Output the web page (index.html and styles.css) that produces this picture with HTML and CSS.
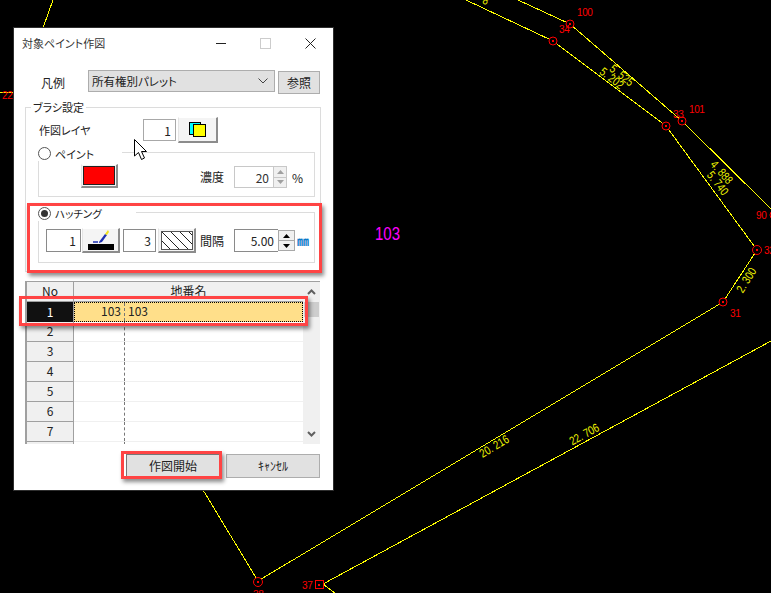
FILE: index.html
```
<!DOCTYPE html>
<html lang="ja">
<head>
<meta charset="utf-8">
<title>対象ペイント作図</title>
<link rel="stylesheet" href="styles.css">
</head>
<body>
<div class="desktop">
  <svg class="drawing" width="771" height="593" viewBox="0 0 771 593">
    <g class="lines">
      <polyline points="466,0 553,41 666,126 757,250 723,302 258,581 203,490"/>
      <polyline points="518,0 570,24 682,121 771,209"/>
      <polyline points="53,0 43,28"/>
      <polyline points="0,92 13,92"/>
      <polyline points="771,341 323,584 335,593"/>
    </g>
    <g class="nodes">
      <circle cx="553" cy="41" r="4"/><circle cx="570" cy="24" r="4"/>
      <circle cx="666" cy="126" r="4"/><circle cx="682" cy="121" r="4"/>
      <circle cx="757" cy="250" r="4.500"/><circle cx="723" cy="302" r="4"/>
      <circle cx="258" cy="582" r="4.500"/><circle cx="774" cy="215" r="4"/>
      <rect x="315.500" y="580.500" width="8" height="8"/>
    </g>
    <g class="dots">
      <rect x="552" y="40" width="2" height="2"/><rect x="569" y="23" width="2" height="2"/>
      <rect x="665" y="125" width="2" height="2"/><rect x="681" y="120" width="2" height="2"/>
      <rect x="756" y="249" width="2" height="2"/><rect x="722" y="301" width="2" height="2"/>
      <rect x="257" y="581" width="2" height="2"/><rect x="318" y="584" width="2" height="2"/>
    </g>
    <g class="point-labels">
      <text x="577" y="16">100</text><text x="559" y="33">34</text>
      <text x="689" y="113">101</text><text x="673" y="118">33</text>
      <text x="756" y="219">90</text><text x="764" y="254">32</text>
      <text x="730" y="317">31</text><text x="302" y="589">37</text>
      <text x="253" y="598">38</text><text x="2" y="99">22</text>
    </g>
    <g class="dim-labels">
      <text transform="translate(494 446) rotate(-31) scale(.8 1)">20. 216</text>
      <text transform="translate(584 434) rotate(-29) scale(.8 1)">22. 706</text>
      <text transform="translate(622 75) rotate(38) scale(.8 1)">5. 525</text>
      <text transform="translate(612 78) rotate(38) scale(.8 1)">5. 202</text>
      <text transform="translate(722 172) rotate(48) scale(.8 1)">4. 888</text>
      <text transform="translate(718 183) rotate(52) scale(.8 1)">5. 740</text>
      <text transform="translate(746 280) rotate(-58) scale(.8 1)">2. 300</text>
      <text transform="translate(486 0) rotate(25) scale(.8 1)">8</text>
    </g>
    <text class="parcel-label" x="375" y="240" textLength="25" lengthAdjust="spacingAndGlyphs">103</text>
  </svg>

  <section class="dialog">
    <header class="titlebar">
      <span class="title">対象ペイント作図</span>
      <div class="winctl">
        <span class="winbtn"><svg width="10" height="10" viewBox="0 0 10 10"><path class="ctl-line" d="M0 5.500H10"/></svg></span>
        <span class="winbtn"><svg width="11" height="11" viewBox="0 0 11 11"><rect class="ctl-off" x="0.500" y="0.500" width="10" height="10"/></svg></span>
        <span class="winbtn"><svg width="11" height="11" viewBox="0 0 11 11"><path class="ctl-line" d="M0.500 0.500L10.500 10.500M10.500 0.500L0.500 10.500"/></svg></span>
      </div>
    </header>

    <div class="legend-row">
      <span class="legend-label">凡例</span>
      <div class="select">
        <span>所有権別パレット</span>
        <svg width="10" height="6" viewBox="0 0 10 6"><path class="chev" d="M0.500 0.500L5 5L9.500 0.500"/></svg>
      </div>
      <div class="flat-btn ref-btn">参照</div>
    </div>

    <div class="group">
      <span class="group-title">ブラシ設定</span>
      <div class="layer-row">
        <span class="layer-label">作図レイヤ</span>
        <div class="field layer-field">1</div>
        <div class="raised layer-btn">
          <svg width="18" height="16" viewBox="0 0 18 16"><rect class="sq-cyan" x="0.500" y="0.500" width="11" height="12"/><rect class="sq-yellow" x="4.500" y="2.500" width="12" height="12"/></svg>
        </div>
      </div>

      <div class="subgroup paint">
        <div class="radio-legend paint-legend"><span class="radio"></span><span>ペイント</span></div>
        <div class="paint-row">
          <div class="raised swatch-btn"><span class="swatch"></span></div>
          <span class="density-label">濃度</span>
          <div class="spin-wrap off">
            <div class="field density-field">20</div>
            <div class="spinner off">
              <span class="spin-btn"><svg width="7" height="4" viewBox="0 0 7 4"><path d="M3.500 0L7 4H0Z"/></svg></span>
              <span class="spin-btn"><svg width="7" height="4" viewBox="0 0 7 4"><path d="M0 0H7L3.500 4Z"/></svg></span>
            </div>
          </div>
          <span class="pct">%</span>
        </div>
      </div>

      <div class="subgroup hatch">
        <div class="radio-legend hatch-legend"><span class="radio checked"></span><span>ハッチング</span></div>
        <div class="hatch-row">
          <div class="field pen-field">1</div>
          <div class="raised tool-btn pen-btn">
            <svg width="28" height="22" viewBox="0 0 28 22">
              <rect x="1" y="15" width="26" height="6" fill="#000"/>
              <path d="M12 13L18 5L20 6L15 13L12 14Z" fill="#1d2fb0"/>
              <path d="M18 5L21 1L22 3L20 6Z" fill="#f2e21b"/>
              <path d="M6 13H11" stroke="#1d2fb0" stroke-width="1.500"/>
            </svg>
          </div>
          <div class="field hatch-field">3</div>
          <div class="raised tool-btn hatch-btn">
            <svg width="32" height="19" viewBox="0 0 32 19">
              <rect x="0.500" y="0.500" width="31" height="18" fill="#fff" stroke="#555"/>
              <path class="hatch-lines" d="M1 1L18 18M10 1L27 18M19 1L31 13M28 1L31 4M1 10L9 18"/>
            </svg>
          </div>
          <span class="gap-label">間隔</span>
          <div class="spin-wrap">
            <div class="field gap-field">5.00</div>
            <div class="spinner">
              <span class="spin-btn"><svg width="7" height="4" viewBox="0 0 7 4"><path d="M3.500 0L7 4H0Z"/></svg></span>
              <span class="spin-btn"><svg width="7" height="4" viewBox="0 0 7 4"><path d="M0 0H7L3.500 4Z"/></svg></span>
            </div>
          </div>
          <span class="unit">㎜</span>
        </div>
      </div>
    </div>

    <div class="table">
      <div class="grid">
        <div class="row head"><div class="no">No</div><div class="head-name">地番名</div></div>
        <div class="row current"><div class="no">1</div><div class="data"><span class="num">103</span><span class="name">103</span></div></div>
        <div class="row"><div class="no">2</div><div class="data"><span class="num"></span><span class="name"></span></div></div>
        <div class="row"><div class="no">3</div><div class="data"><span class="num"></span><span class="name"></span></div></div>
        <div class="row"><div class="no">4</div><div class="data"><span class="num"></span><span class="name"></span></div></div>
        <div class="row"><div class="no">5</div><div class="data"><span class="num"></span><span class="name"></span></div></div>
        <div class="row"><div class="no">6</div><div class="data"><span class="num"></span><span class="name"></span></div></div>
        <div class="row"><div class="no">7</div><div class="data"><span class="num"></span><span class="name"></span></div></div>
        <div class="row"><div class="no"></div><div class="data"><span class="num"></span><span class="name"></span></div></div>
      </div>
      <div class="scrollbar">
        <span class="arrow"><svg width="9" height="6" viewBox="0 0 9 6"><path class="sb-chev" d="M1 5L4.500 1.500L8 5"/></svg></span>
        <span class="thumb"></span>
        <span class="arrow bottom"><svg width="9" height="6" viewBox="0 0 9 6"><path class="sb-chev" d="M1 1L4.500 4.500L8 1"/></svg></span>
      </div>
    </div>

    <div class="actions">
      <div class="flat-btn action start">作図開始</div>
      <div class="flat-btn action">ｷｬﾝｾﾙ</div>
    </div>

    <span class="mark mark-hatch"></span>
    <span class="mark mark-row"></span>
    <span class="mark mark-start"></span>
  </section>

  <svg class="cursor" width="14" height="22" viewBox="0 0 14 22">
    <path d="M0.500 0.500V17L4.500 13.500L7.500 20.500L10.500 19L7.500 12.500H12.500Z"/>
  </svg>
</div>
</body>
</html>
```
FILE: styles.css
```
* { box-sizing: border-box; }
html, body { margin: 0; padding: 0; background: #000; }
body {
  font-family: "Noto Sans CJK JP", "Noto Sans", sans-serif;
  font-size: 11px;
  font-feature-settings: "palt";
  color: #222;
}
.desktop { position: relative; width: 771px; height: 593px; overflow: hidden; background: #000; }

/* drawing */
.drawing { position: absolute; left: 0; top: 0; }
.lines polyline { fill: none; stroke: #ff0; stroke-width: 1; shape-rendering: crispEdges; }
.nodes circle, .nodes rect { fill: #000; stroke: #f00; stroke-width: 1; }
.dots rect { fill: #f00; }
.point-labels text { fill: #f00; font-family: "Liberation Sans", sans-serif; font-size: 10px; letter-spacing: -0.4px; }
.dim-labels text { fill: #f0f500; font-family: "Liberation Sans", sans-serif; font-size: 12px; text-anchor: middle; dominant-baseline: central; }
.parcel-label { fill: #f0f; font-family: "Liberation Sans", sans-serif; font-size: 19px; }

/* dialog */
.dialog {
  position: absolute; left: 14px; top: 28px; width: 319px; height: 462px;
  padding: 0 13px 0 11px; background: #fff;
  box-shadow: 0 0 0 1px #2e2e2e;
}
.titlebar { display: flex; align-items: center; justify-content: space-between; height: 30px; margin: 0 -13px 0 -11px; padding-left: 8px; }
.title { line-height: 30px; color: #333; }
.winctl { display: flex; height: 30px; }
.winbtn { display: flex; width: 45px; align-items: center; justify-content: center; }
.ctl-line { fill: none; stroke: #222; }
.ctl-off { fill: none; stroke: #ccc; }

.legend-row { display: flex; align-items: flex-start; margin-top: 12px; }
.legend-label { width: 47px; margin-left: 16px; margin-top: 4px; font-size: 12px; line-height: 18px; }
.select {
  display: flex; align-items: center; justify-content: space-between;
  width: 187px; height: 22px; padding: 0 6px 0 3px;
  background: #e1e1e1; border: 1px solid #adadad; font-size: 11.500px;
}
.chev { fill: none; stroke: #444; }
.flat-btn { display: flex; align-items: center; justify-content: center; background: #e1e1e1; border: 1px solid #adadad; font-size: 12px; }
.ref-btn { width: 42px; height: 23px; margin-left: 3px; margin-top: 1px; }

.group { position: relative; width: 296px; margin-top: 13px; padding: 9px 5px 8px 12px; border: 1px solid #dcdcdc; }
.group-title { position: absolute; left: 5px; top: -8px; padding: 0 2px; background: #fff; font-size: 11px; line-height: 15px; }

.field { display: flex; align-items: center; justify-content: flex-end; background: #fff; border: 1px solid #8a8a8a; padding-right: 4px; font-size: 12px; }
.raised {
  display: flex; align-items: center; justify-content: center; background: #f4f4f4;
  border-style: solid; border-width: 1px 2px 2px 1px;
  border-color: #fff #8c8c8c #8c8c8c #e4e4e4;
}

.layer-row { display: flex; align-items: center; height: 26px; }
.layer-label { width: 104px; margin-left: 1px; font-size: 11px; }
.layer-field { width: 33px; height: 22px; border-color: #a8a8a8; }
.layer-btn { width: 40px; height: 26px; margin-left: 2px; }
.sq-cyan { fill: #0ff; stroke: #000; }
.sq-yellow { fill: #ff0; stroke: #000; }

.subgroup { position: relative; width: 277px; border: 1px solid #dcdcdc; }
.paint { height: 45px; margin-top: 9px; padding: 11px 0 0 42px; }
.hatch { height: 51px; margin-top: 15px; padding: 15px 0 0 7px; }
.radio-legend { position: absolute; left: -1px; top: -7px; display: flex; align-items: center; gap: 4px; height: 15px; background: #fff; font-size: 11px; }
.paint-legend { width: 84px; }
.hatch-legend { width: 98px; font-size: 10.500px; }
.radio { position: relative; width: 13px; height: 13px; border: 1px solid #555; border-radius: 50%; background: #fff; }
.radio.checked::after { content: ""; position: absolute; left: 2px; top: 2px; width: 7px; height: 7px; border-radius: 50%; background: #333; }

.paint-row { display: flex; align-items: center; height: 24px; }
.swatch-btn { width: 37px; height: 24px; padding: 1px; }
.swatch { display: block; width: 100%; height: 100%; background: #f00; border: 1px solid #222; }
.density-label { width: 24px; margin-left: 82px; font-size: 12px; }
.spin-wrap { display: flex; align-items: center; }
.paint-row .spin-wrap { margin-left: 10px; margin-top: 2px; }
.density-field { width: 39px; height: 22px; border-color: #c8c8c8; border-right: 0; color: #333; }
.pct { margin-left: 5px; margin-top: 2px; font-size: 12px; }
.spinner { display: flex; flex-direction: column; gap: 1px; width: 17px; height: 21px; padding: 1px; background: #a8a8a8; }
.spinner.off { width: 14px; height: 22px; background: #c8c8c8; }
.spin-btn { display: flex; flex: 1; align-items: center; justify-content: center; background: #f0f0f0; }
.spin-btn path { fill: #000; }
.spinner.off .spin-btn path { fill: #a0a0a0; }

.hatch-row { display: flex; align-items: center; height: 25px; }
.pen-field { width: 35px; height: 23px; }
.tool-btn { width: 38px; height: 25px; }
.pen-btn { margin-left: 1px; }
.hatch-field { width: 33px; height: 23px; margin-left: 3px; }
.hatch-btn { margin-left: 2px; }
.hatch-lines { fill: none; stroke: #222; shape-rendering: crispEdges; }
.gap-label { width: 24px; margin-left: 4px; font-size: 12px; }
.hatch-row .spin-wrap { margin-left: 10px; }
.gap-field { width: 44px; height: 23px; border-right: 0; }
.unit { margin-left: 2px; color: #0a78c8; font-size: 12px; font-weight: 700; }

/* table */
.table { display: flex; width: 295px; height: 163px; margin-top: 9px; border-top: 1px solid #a0a0a0; border-left: 2px solid #a0a0a0; }
.grid { width: 276px; height: 162px; overflow: hidden; }
.row { display: grid; grid-template-columns: 47px 229px; height: 20px; font-size: 12px; }
.no { display: flex; align-items: center; justify-content: center; padding-bottom: 2px; background: #f0f0f0; border-right: 1px solid #a0a0a0; border-bottom: 1px solid #a0a0a0; }
.head-name { display: flex; align-items: center; justify-content: center; padding-bottom: 2px; background: #f0f0f0; border-bottom: 1px solid #a0a0a0; }
.data { display: flex; border-bottom: 1px solid #f0f0f0; }
.num { width: 51px; padding-right: 3px; line-height: 19px; text-align: right; border-right: 1px dashed #777; }
.name { flex: 1; padding-left: 3px; line-height: 19px; }
.current .no { background: #111; color: #fff; border-bottom: 0; }
.current .data { background: #ffdf8a; border: 1px dotted #000; }
.current .num { width: 50px; line-height: 16px; }
.current .name { line-height: 16px; }
.scrollbar { display: flex; flex-direction: column; align-items: center; width: 17px; background: #f0f0f0; }
.arrow { display: flex; align-items: center; justify-content: center; height: 20px; }
.arrow.bottom { margin-top: auto; }
.thumb { width: 15px; height: 15px; background: #cdcdcd; }
.sb-chev { fill: none; stroke: #606060; stroke-width: 2; }

.actions { display: flex; gap: 6px; width: 295px; justify-content: flex-end; margin-top: 10px; }
.action { width: 94px; height: 24px; padding-bottom: 2px; }
.start { border-left-color: #777; border-top-color: #777; }

/* annotations */
.mark { position: absolute; border: 3px solid #ff4444; box-shadow: 2px 3px 4px rgba(0,0,0,.45); }
.mark-hatch { left: 13px; top: 175px; width: 295px; height: 70px; }
.mark-row { left: 5px; top: 268px; width: 289px; height: 30px; }
.mark-start { left: 107px; top: 423px; width: 101px; height: 28px; }

.cursor { position: absolute; left: 134px; top: 139px; }
.cursor path { fill: #fff; stroke: #000; }
```
